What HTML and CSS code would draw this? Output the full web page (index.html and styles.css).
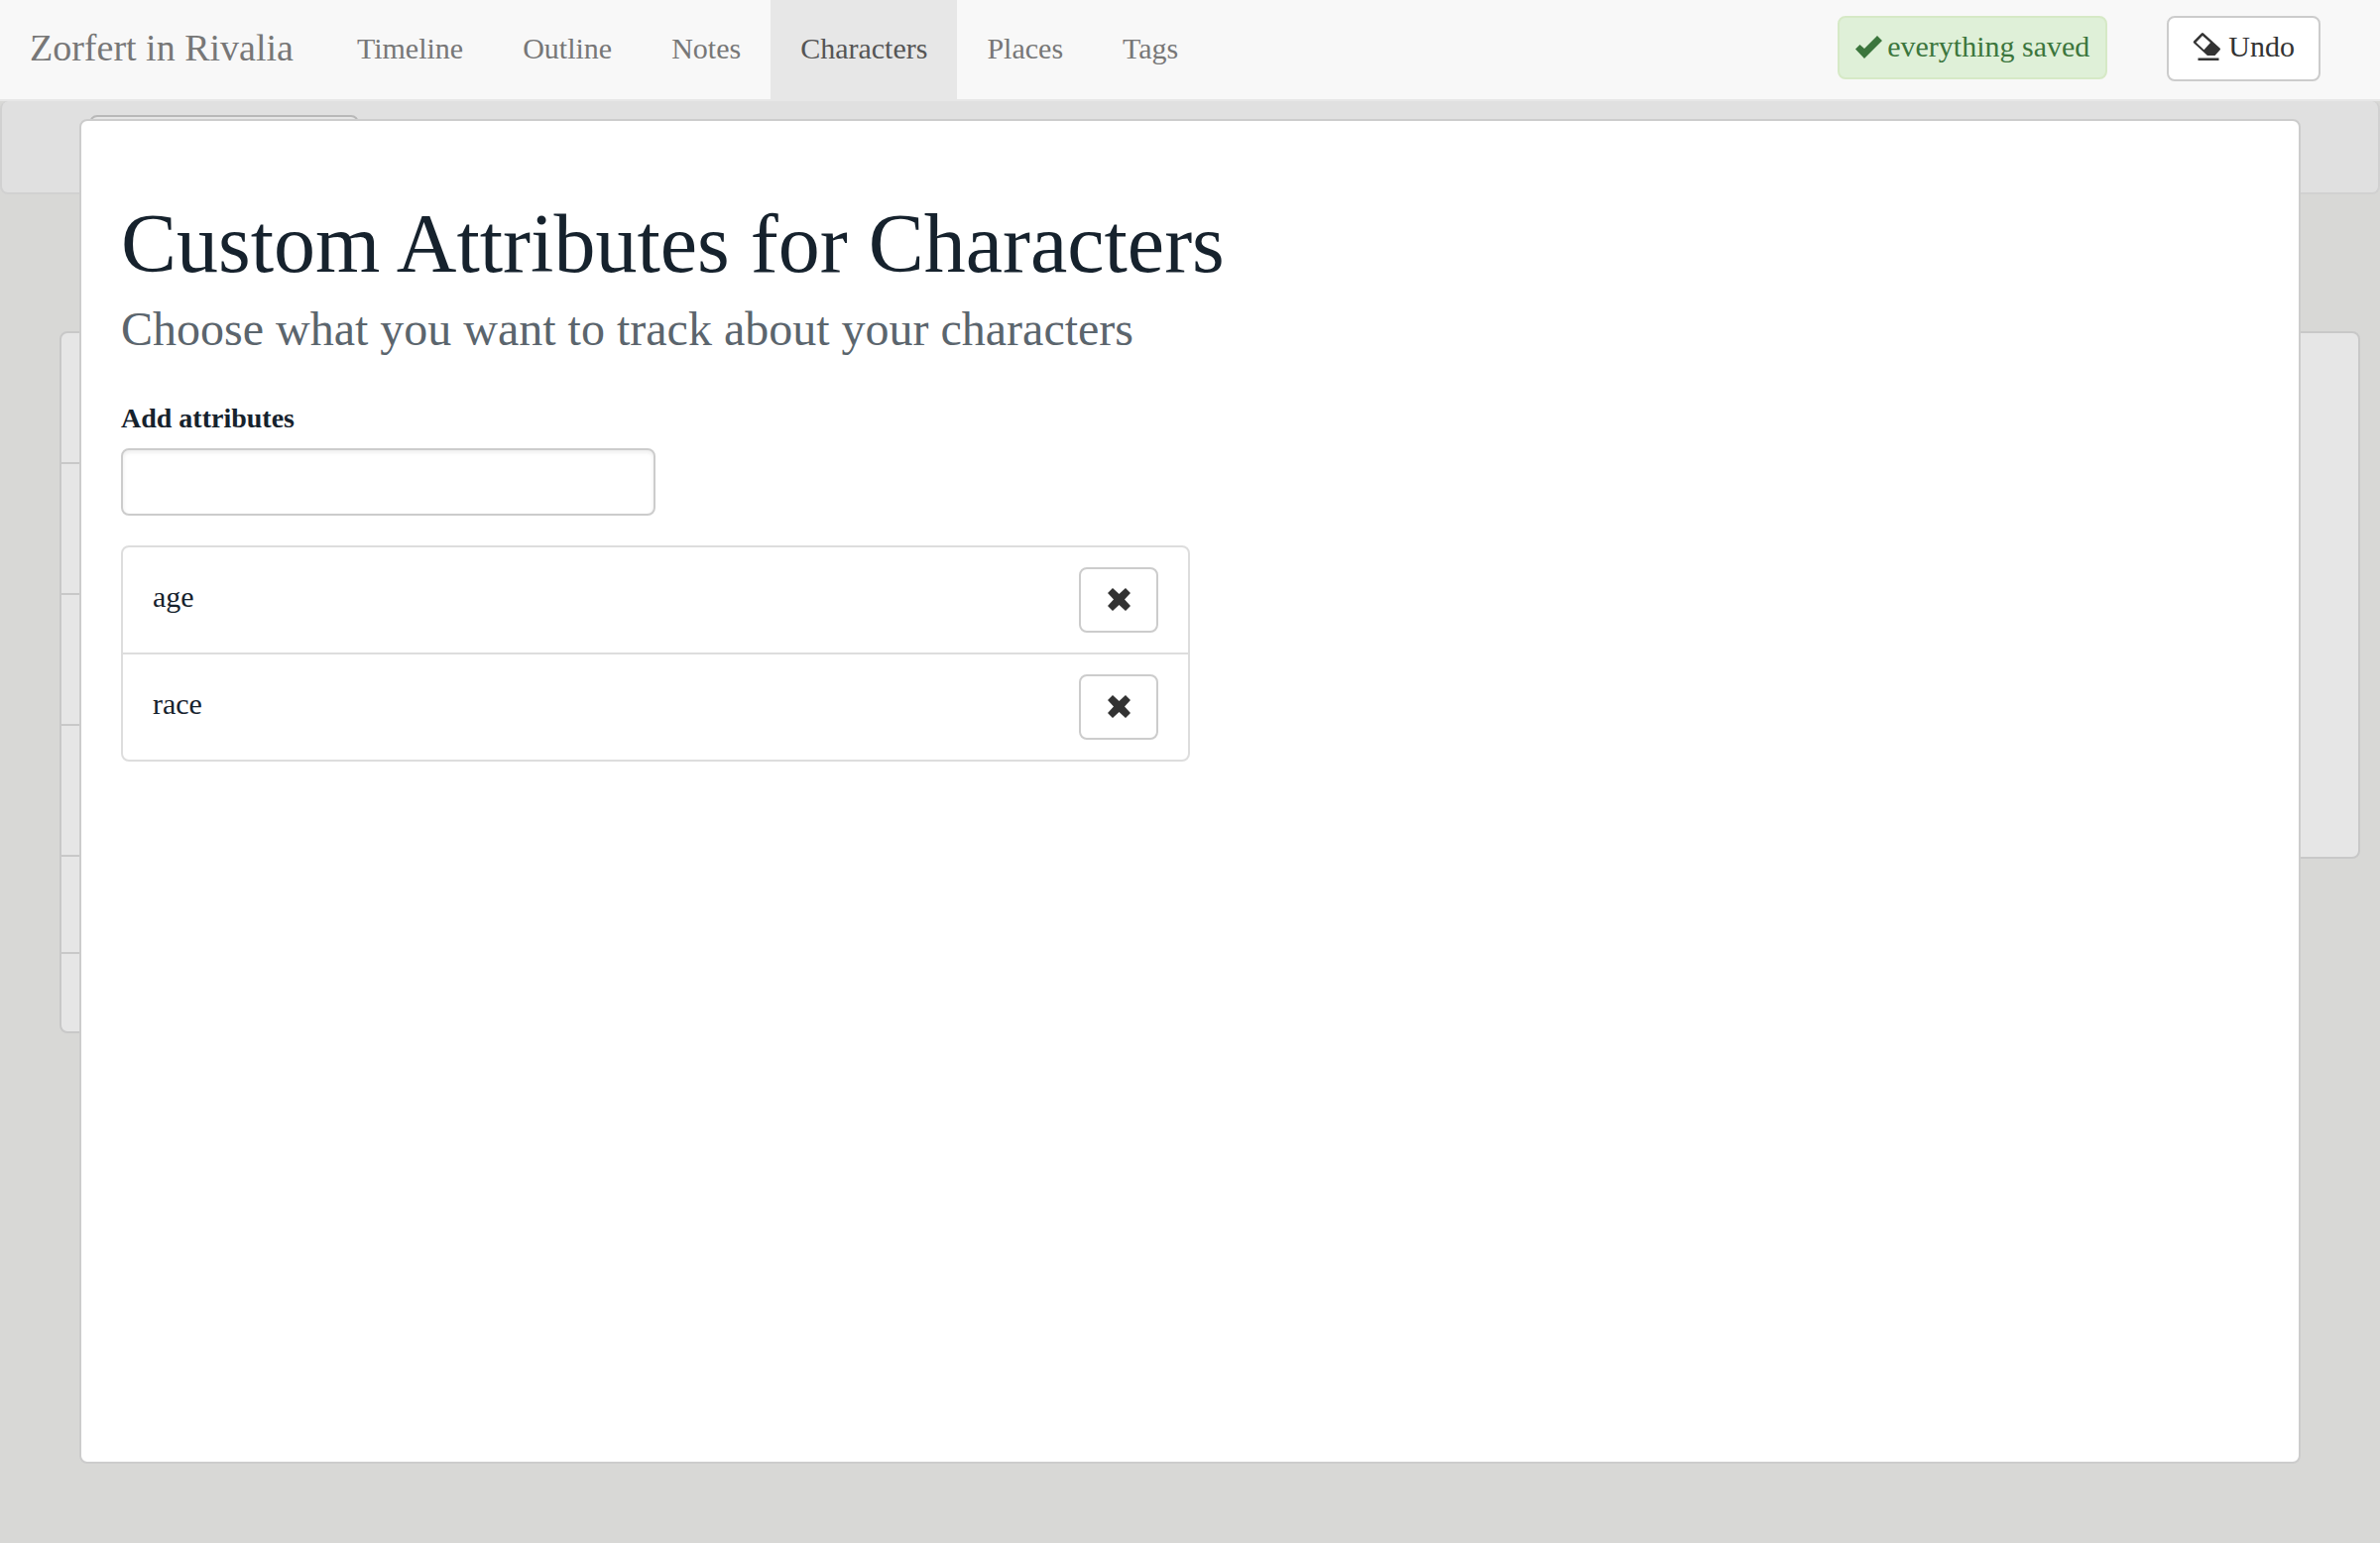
FILE: index.html
```
<!DOCTYPE html>
<html lang="en">
<head>
<meta charset="utf-8">
<meta name="viewport" content="width=device-width, initial-scale=1">
<title>Zorfert in Rivalia</title>
<link rel="stylesheet" href="styles.css">
</head>
<body>
<nav class="navbar">
  <a class="brand" href="#">Zorfert in Rivalia</a>
  <ul class="nav">
    <li><a class="nav-link" href="#">Timeline</a></li>
    <li><a class="nav-link" href="#">Outline</a></li>
    <li><a class="nav-link" href="#">Notes</a></li>
    <li><a class="nav-link active" href="#">Characters</a></li>
    <li><a class="nav-link" href="#">Places</a></li>
    <li><a class="nav-link" href="#">Tags</a></li>
  </ul>
  <div class="actions">
    <div class="alert" role="status">
      <svg class="icon-check" viewBox="0 0 27 23" aria-hidden="true"><path d="M22 0l5 5L9 23 0 13.500l4.500-4.500L9 13z"/></svg>
      <span>everything saved</span>
    </div>
    <button class="btn" type="button">
      <svg class="icon-eraser" viewBox="0 0 28 28" aria-hidden="true"><path fill-rule="evenodd" d="M8.500 0.500q1-.8 2 0L27 15.500q1 1 0 2L22 23H14.500L.8 10.500q-1-1-.2-2zM9.500 3L3 9.800l8 7.500L17.500 10z"/><path d="M5 25.500h21V28H5z"/></svg>
      <span>Undo</span>
    </button>
  </div>
</nav>
<main class="page">
  <div class="subnav"><div class="subnav-button"></div></div>
  <div class="columns">
    <div class="entries">
      <div class="entry"></div>
      <div class="entry"></div>
      <div class="entry"></div>
      <div class="entry"></div>
      <div class="entry entry-medium"></div>
      <div class="entry entry-short"></div>
    </div>
    <div class="details"></div>
  </div>
</main>
<section class="modal" role="dialog" aria-labelledby="modal-title">
  <h1 id="modal-title">Custom Attributes for Characters</h1>
  <p class="subtitle">Choose what you want to track about your characters</p>
  <form class="field">
    <label for="attribute">Add attributes</label>
    <input id="attribute" type="text">
  </form>
  <ul class="attributes">
    <li><span>age</span>
      <button class="btn btn-remove" type="button" aria-label="Remove age"><svg class="icon-remove" viewBox="0 0 23 23" aria-hidden="true"><path d="M5 0l6.500 6L18 0l5 5-6 6.500 6 6.500-5 5-6.500-6L5 23l-5-5 6-6.500L0 5z"/></svg></button></li>
    <li><span>race</span>
      <button class="btn btn-remove" type="button" aria-label="Remove race"><svg class="icon-remove" viewBox="0 0 23 23" aria-hidden="true"><path d="M5 0l6.500 6L18 0l5 5-6 6.500 6 6.500-5 5-6.500-6L5 23l-5-5 6-6.500L0 5z"/></svg></button></li>
  </ul>
</section>
</body>
</html>
```
FILE: styles.css
```
* { box-sizing: border-box; }
body {
  margin: 0;
  min-height: 100vh;
  background: #d8d8d6;
  color: #16222d;
  font: 30px/40px "Liberation Serif", serif;
}
ul { list-style: none; margin: 0; padding: 0; }
svg { display: block; fill: currentColor; }

.navbar {
  display: flex;
  height: 102px;
  background: #f8f8f8;
  border-bottom: 2px solid #e7e7e7;
}
.brand {
  padding: 28px 34px 28px 30px;
  font-size: 38px;
  color: #777;
  text-decoration: none;
  white-space: nowrap;
}
.nav { display: flex; }
.nav-link {
  display: block;
  height: 102px;
  padding: 29px 30px;
  color: #777;
  text-decoration: none;
}
.nav-link.active { background: #e7e7e7; color: #555; }
.actions {
  display: flex;
  align-items: flex-start;
  gap: 60px;
  margin-left: auto;
  padding: 16px 60px 0 0;
}
.alert {
  display: flex;
  align-items: center;
  gap: 5px;
  height: 64px;
  padding: 0 16px 2px;
  border: 2px solid #d6e9c6;
  border-radius: 8px;
  background: #dff0d8;
  color: #3c763d;
}
.icon-check { width: 27px; height: 23px; }
.btn {
  display: flex;
  align-items: center;
  justify-content: center;
  gap: 7px;
  height: 66px;
  padding: 0 24px 4px;
  border: 2px solid #ccc;
  border-radius: 8px;
  background: #fff;
  color: #333;
  font: inherit;
}
.icon-eraser { width: 29px; height: 28px; }

.subnav {
  height: 94px;
  padding: 14px 88px 0;
  border: 2px solid #d1d1d1;
  border-top: 0;
  border-radius: 8px;
  background: #e0e0e0;
}
.subnav-button {
  width: 272px;
  height: 66px;
  border: 2px solid #b8b8b8;
  border-radius: 8px;
  background: #e6e6e6;
}
.columns {
  display: grid;
  grid-template-columns: 1fr 3fr;
  gap: 60px;
  align-items: start;
  padding: 138px 20px 0 60px;
}
.entries, .details {
  border: 2px solid #c8c8c8;
  border-radius: 8px;
  background: #e6e6e6;
}
.entry { height: 132px; border-bottom: 2px solid #c8c8c8; }
.entry-medium { height: 98px; }
.entry-short { height: 78px; border-bottom: 0; }
.details { height: 532px; }

.modal {
  position: fixed;
  inset: 120px 80px 80px;
  overflow: auto;
  padding: 80px 40px 40px;
  border: 2px solid #ccc;
  border-radius: 8px;
  background: #fff;
}
h1 {
  margin: 0;
  font-size: 84px;
  font-weight: 400;
  line-height: 88px;
}
.subtitle {
  margin: 16px 0 0;
  font-size: 48px;
  line-height: 52px;
  color: #5b656d;
}
.field { margin: 44px 0 0; }
.field label { display: block; font-size: 28px; font-weight: 700; }
.field input {
  display: block;
  width: 25%;
  height: 68px;
  margin-top: 10px;
  padding: 12px 24px;
  border: 2px solid #ccc;
  border-radius: 8px;
  background: #fff;
  box-shadow: inset 0 2px 4px rgba(0, 0, 0, .08);
  font: inherit;
}
.attributes {
  width: 50%;
  margin-top: 30px;
  border: 2px solid #ddd;
  border-radius: 8px;
}
.attributes li {
  display: flex;
  align-items: flex-start;
  justify-content: space-between;
  padding: 20px 30px;
}
.attributes li span { padding-top: 10px; }
.attributes li + li { border-top: 2px solid #ddd; }
.btn-remove { width: 80px; padding: 0 0 2px; }
.icon-remove { width: 23px; height: 23px; }
```
